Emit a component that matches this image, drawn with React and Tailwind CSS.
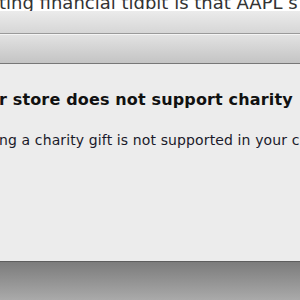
export default function App() {
  return (
    <div className="w-[300px] h-[300px] overflow-hidden flex flex-col bg-[#ececec]" style={{ fontFamily: '"DejaVu Sans", sans-serif' }}>
      <div className="h-[11px] bg-white overflow-hidden relative shrink-0">
        <div className="absolute left-[-1px] top-[-6px] whitespace-nowrap text-[18px] leading-[18px] text-[#333]">ting financial tidbit is that AAPL s</div>
      </div>
      <div className="h-[22px] shrink-0 bg-gradient-to-b from-[#ebebeb] to-[#d6d6d6]"></div>
      <div className="h-px shrink-0 bg-[#9a9a9a]"></div>
      <div className="h-px shrink-0 bg-[#f4f4f4]"></div>
      <div className="h-[28px] shrink-0 bg-gradient-to-b from-[#e2e2e2] to-[#c4c4c4]"></div>
      <div className="h-px shrink-0 bg-[#777]"></div>
      <div className="flex-1 flex flex-col pt-[27px]">
        <div className="whitespace-nowrap text-[16px] font-bold leading-[18px] tracking-[0.15px] text-[#111] ml-[-1px]">r store does not support charity</div>
        <div className="whitespace-nowrap text-[14px] leading-[16px] tracking-[0.12px] text-[#1a1a2a] mt-[23px] ml-[-1px]">ng a charity gift is not supported in your c</div>
      </div>
      <div className="h-px shrink-0 bg-[#5e5e5e]"></div>
      <div className="h-[38px] shrink-0 bg-gradient-to-b from-[#7c7c7c] to-[#aaaaaa]"></div>
    </div>
  );
}
